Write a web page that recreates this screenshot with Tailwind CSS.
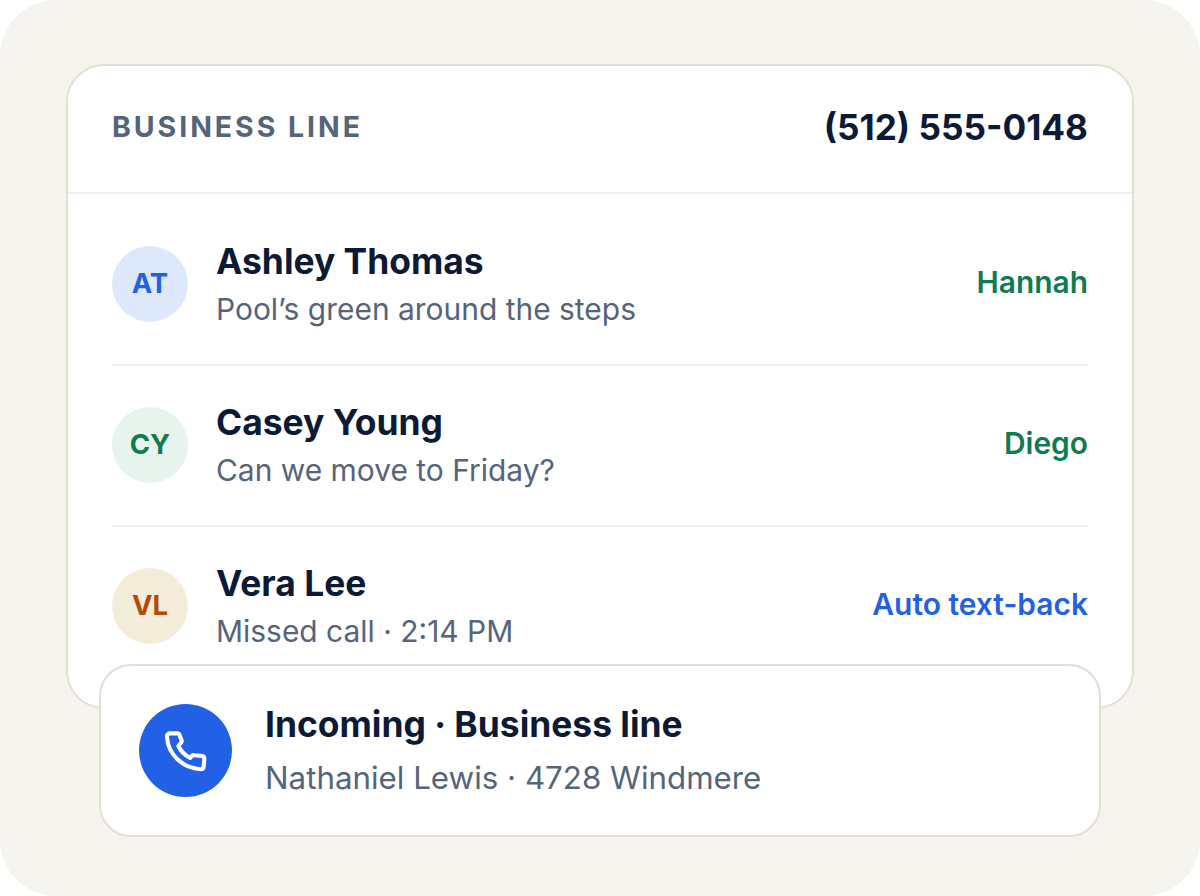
<!DOCTYPE html>
<html lang="en">
<head>
    <meta charset="UTF-8">
    <meta name="viewport" content="width=device-width, initial-scale=1.0">
    <title>Business Line</title>
    <script src="https://cdn.jsdelivr.net/npm/@tailwindcss/browser@4"></script>
</head>
<body class="bg-white font-['Inter',sans-serif] overflow-hidden">
    <div class="relative w-[1200px] h-[896px] bg-[#f6f4ef] rounded-[56px] px-[66px] pt-[64px]">
        <!-- Inbox card -->
        <div class="h-[645px] bg-white border-2 border-[#e5ded5] rounded-[38px] overflow-hidden">
            <div class="h-[128px] px-11 pb-1 flex items-center justify-between border-b-2 border-[#edf0f6]">
                <span class="text-[28.5px] font-bold tracking-[2.95px] text-[#56647b]">BUSINESS LINE</span>
                <span class="text-[35.2px] font-bold text-[#0c1a36]">(512) 555-0148</span>
            </div>
            <div class="px-11 pt-[10px]">
                <div class="h-[162px] flex items-center border-b-2 border-[#edf0f6]">
                    <div class="size-[76px] pb-px rounded-full bg-[#dde8fb] text-[#2260e6] text-[27.5px] font-bold flex items-center justify-center">AT</div>
                    <div class="ml-7 flex-1">
                        <div class="text-[35.4px] leading-[50px] font-bold text-[#0c1a36]">Ashley Thomas</div>
                        <div class="text-[29.95px] leading-[44px] text-[#56647b]">Pool’s green around the steps</div>
                    </div>
                    <span class="pb-1 text-[29.9px] font-semibold text-[#107a50]">Hannah</span>
                </div>
                <div class="h-[161px] pb-px flex items-center border-b-2 border-[#edf0f6]">
                    <div class="size-[76px] pb-px rounded-full bg-[#e7f4ed] text-[#107a50] text-[27.5px] font-bold flex items-center justify-center">CY</div>
                    <div class="ml-7 flex-1">
                        <div class="text-[35.4px] leading-[50px] font-bold text-[#0c1a36]">Casey Young</div>
                        <div class="text-[29.95px] leading-[44px] text-[#56647b]">Can we move to Friday?</div>
                    </div>
                    <span class="pb-1 text-[29.9px] font-semibold text-[#107a50]">Diego</span>
                </div>
                <div class="h-[158px] flex items-center">
                    <div class="size-[76px] pb-px rounded-full bg-[#f3ecd9] text-[#b54708] text-[27.5px] font-bold flex items-center justify-center">VL</div>
                    <div class="ml-7 flex-1">
                        <div class="text-[35.4px] leading-[50px] font-bold text-[#0c1a36]">Vera Lee</div>
                        <div class="text-[29.95px] leading-[44px] text-[#56647b]">Missed call · 2:14 PM</div>
                    </div>
                    <span class="pb-1 text-[29.95px] font-semibold text-[#2260e6]">Auto text-back</span>
                </div>
            </div>
        </div>
        <!-- Incoming call toast -->
        <div class="absolute left-[99px] top-[664px] w-[1002px] h-[173px] bg-white border-2 border-[#e5ded5] rounded-[32px] px-[38px] flex items-center">
            <div class="size-[93px] rounded-full bg-[#2260e6] flex items-center justify-center">
                <svg class="mr-px size-[60px] text-white" viewBox="0 0 60 60" fill="none" stroke="currentColor" stroke-width="4.1" stroke-linecap="round" stroke-linejoin="round">
                    <path d="M12 16Q11.800 12.500 15 12.400L22 12.200Q24 12.200 24.500 14L26.500 19Q27 20.500 26 21.800L23.300 25Q27 32.500 35 37L37.300 34.500Q38 33.800 39.500 34.200L47.300 35Q49.300 35.400 49.300 37.300L48.700 45.500Q48.500 48.200 45.500 48.200C27 47 13 33 12 16Z"/>
                </svg>
            </div>
            <div class="ml-[33px]">
                <div class="text-[35.4px] leading-[54px] font-bold text-[#0c1a36]">Incoming · Business line</div>
                <div class="text-[31.3px] leading-[52px] text-[#56647b]">Nathaniel Lewis · 4728 Windmere</div>
            </div>
        </div>
    </div>
</body>
</html>
